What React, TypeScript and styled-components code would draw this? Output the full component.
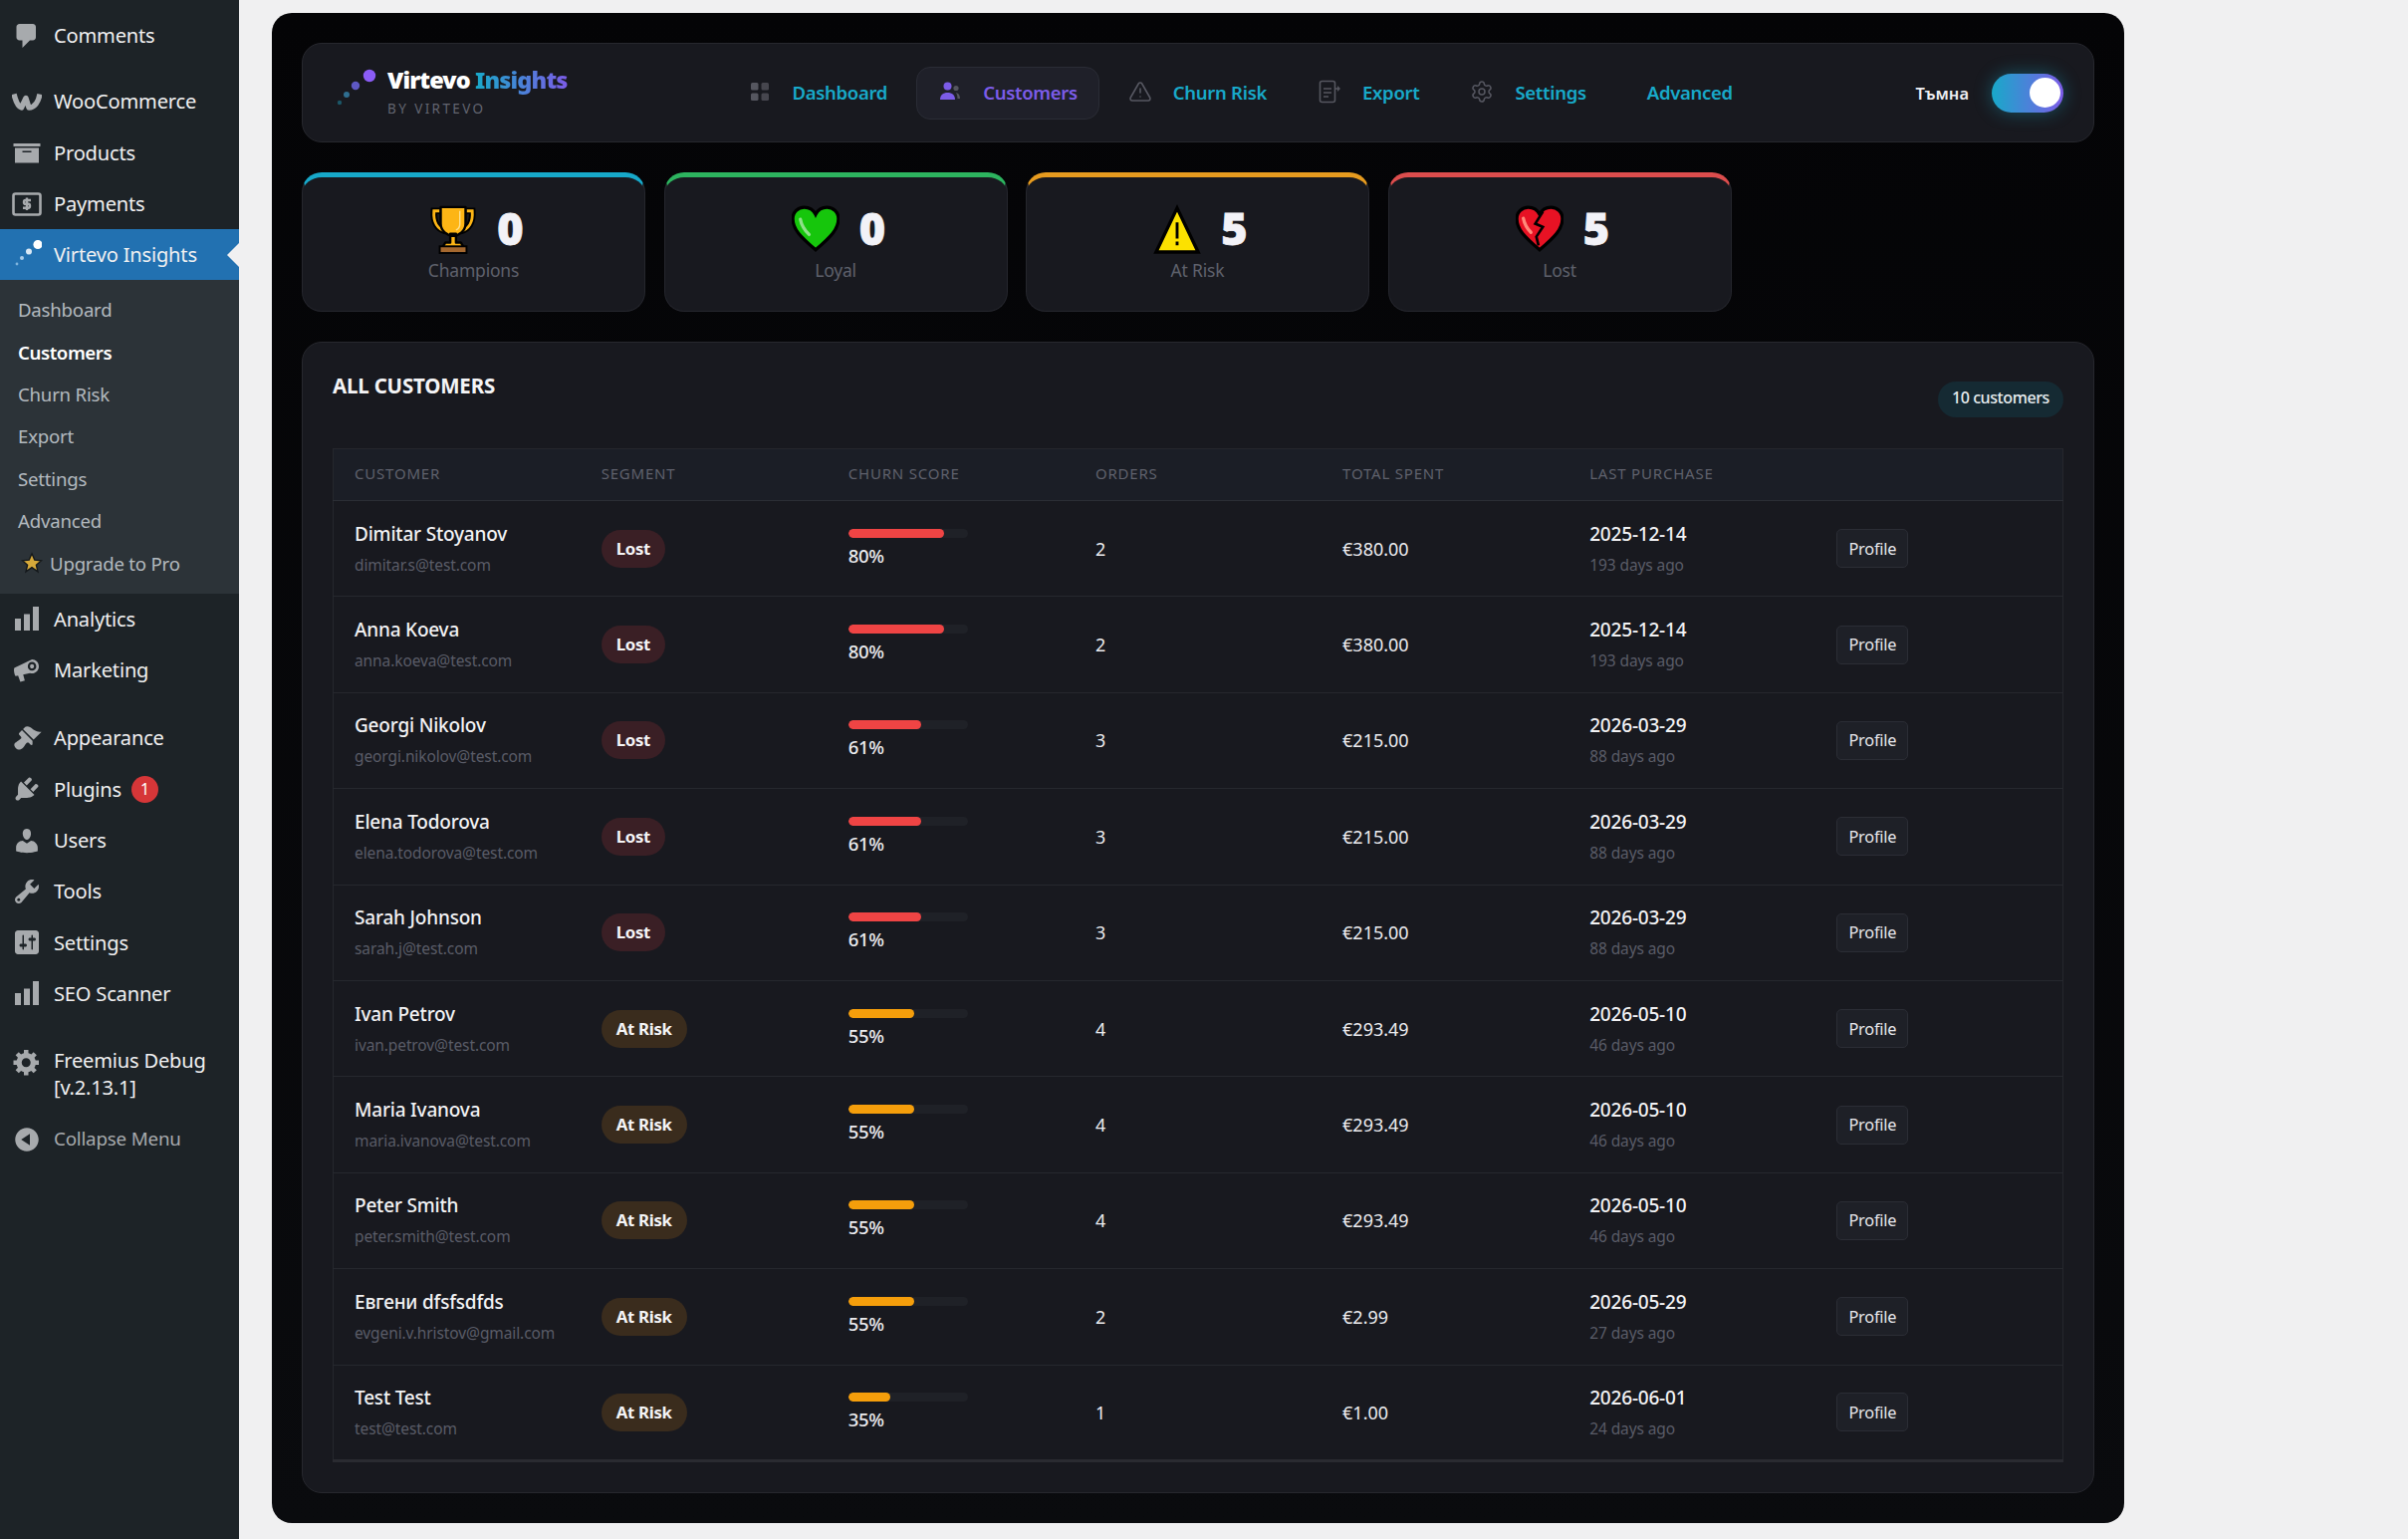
import React from "react";
import styled, { createGlobalStyle } from "styled-components";
import { Settings, TriangleAlert } from "lucide-react";

const GlobalStyle = createGlobalStyle`
  html, body {
    margin: 0;
    background: #f0f0f1;
    height: 1545px;
    overflow: hidden;
  }
  * { box-sizing: border-box; }
  body { font-family: "Noto Sans", "Open Sans", "Liberation Sans", sans-serif; }
`;

const Shell = styled.div`
  display: flex;
  height: 1545px;
`;

/* ---- wp admin menu ---- */
const Sidebar = styled.aside`
  width: 240px;
  flex: none;
  background: #1d2327;
  padding-top: 10px;
`;

const MenuItem = styled.div<{ $gap?: number; $active?: boolean; $muted?: boolean; $tall?: boolean }>`
  position: relative;
  display: flex;
  align-items: ${(p) => (p.$tall ? "flex-start" : "center")};
  height: ${(p) => (p.$tall ? "79px" : "51.3px")};
  margin-top: ${(p) => p.$gap ?? 0}px;
  padding-left: 12px;
  padding-top: ${(p) => (p.$tall ? "12px" : "0")};
  background: ${(p) => (p.$active ? "#2271b1" : "transparent")};
  color: ${(p) => (p.$muted ? "#a7aaad" : "#f0f0f1")};
  font-size: ${(p) => (p.$muted ? "18.8px" : "20.1px")};
  line-height: 27px;
  letter-spacing: -0.2px;

  &::after {
    content: "";
    display: ${(p) => (p.$active ? "block" : "none")};
    position: absolute;
    right: 0;
    top: 50%;
    margin-top: -12px;
    border: 12px solid transparent;
    border-right-color: #f0f0f1;
    border-left-width: 0;
  }
`;

const MenuIcon = styled.svg<{ $white?: boolean }>`
  width: 30px;
  height: 30px;
  flex: none;
  margin-right: 12px;
  fill: ${(p) => (p.$white ? "#fff" : "#a7aaad")};
`;

const Count = styled.span`
  width: 27px;
  height: 27px;
  margin-left: 10px;
  border-radius: 50%;
  background: #d63638;
  color: #fff;
  font-size: 16px;
  line-height: 27px;
  text-align: center;
`;

const Submenu = styled.div`
  background: #2c3338;
  padding: 8px 0 9.5px;
`;

const SubItem = styled.div<{ $current?: boolean }>`
  display: flex;
  align-items: center;
  height: 42.4px;
  padding-left: 18px;
  color: ${(p) => (p.$current ? "#fff" : "rgba(240, 246, 252, 0.7)")};
  font-size: 18.6px;
  font-weight: ${(p) => (p.$current ? 600 : 400)};
  letter-spacing: ${(p) => (p.$current ? "-0.4px" : "-0.2px")};
`;

const StarIcon = styled.svg`
  width: 22px;
  height: 22px;
  margin: 0 7px 0 3px;
`;

/* ---- plugin panel ---- */
const Main = styled.main`
  flex: 1;
  padding: 13px 0 0 33px;
`;

const Panel = styled.div`
  display: flex;
  flex-direction: column;
  gap: 30px;
  width: 1860px;
  height: 1516px;
  padding: 30px;
  border-radius: 20px;
  background: linear-gradient(180deg, #040406, #0a0b0e);
`;

const TopBar = styled.header`
  display: flex;
  align-items: center;
  flex: none;
  height: 100px;
  padding-left: 33px;
  padding-right: 30px;
  border: 1px solid #27282e;
  border-radius: 20px;
  background: #18191f;
`;

const Brand = styled.div`
  display: flex;
  align-items: flex-start;
  width: 391.5px;
  gap: 10px;
`;

const BrandMark = styled.svg`
  width: 42px;
  height: 42px;
  flex: none;
`;

const BrandName = styled.div`
  margin-top: -3px;
  font-size: 23.5px;
  font-weight: 900;
  line-height: 30px;
  letter-spacing: -0.9px;
  color: #fff;
`;

const GradientWord = styled.span`
  background: linear-gradient(90deg, #18a9c9, #7c5ce8);
  -webkit-background-clip: text;
  background-clip: text;
  color: transparent;
`;

const BrandSub = styled.div`
  margin-top: 5px;
  font-size: 13.5px;
  line-height: 18px;
  letter-spacing: 2.4px;
  color: #62646f;
`;

const Nav = styled.nav`
  display: flex;
  align-items: center;
  gap: 7px;
`;

const NavLink = styled.a<{ $active?: boolean; $plain?: boolean }>`
  display: flex;
  align-items: center;
  gap: 21px;
  height: 53px;
  padding: 0 21px 2px ${(p) => (p.$plain ? "31px" : "21px")};
  border: 1px solid ${(p) => (p.$active ? "#2a2c35" : "transparent")};
  border-radius: 14px;
  background: ${(p) => (p.$active ? "#1f2029" : "transparent")};
  color: ${(p) => (p.$active ? "#7c5ce8" : "#18a9c9")};
  font-size: 18.5px;
  font-weight: 600;
  letter-spacing: -0.3px;
  white-space: nowrap;

  svg {
    width: 24px;
    height: 24px;
    flex: none;
    color: #565761;
  }
`;

const ThemeSwitch = styled.div`
  display: flex;
  align-items: center;
  gap: 23px;
  margin-left: auto;
  color: #eeeef2;
  font-size: 16.5px;
  font-weight: 600;
`;

const Toggle = styled.div`
  position: relative;
  width: 72px;
  height: 39px;
  border-radius: 20px;
  background: linear-gradient(90deg, #18a9c9, #7c5ce8);
  box-shadow: 0 0 18px rgba(24, 169, 201, 0.4);

  &::after {
    content: "";
    position: absolute;
    right: 3px;
    top: 4.5px;
    width: 31px;
    height: 30px;
    border-radius: 50%;
    background: #fff;
  }
`;

const StatRow = styled.section`
  display: flex;
  gap: 18.5px;
  flex: none;
`;

const StatCard = styled.div<{ $color: string }>`
  display: flex;
  flex-direction: column;
  align-items: center;
  width: 345px;
  height: 140px;
  padding-top: 26px;
  border: 1px solid #25262d;
  border-top: 5px solid ${(p) => p.$color};
  border-radius: 20px;
  background: #18191f;
`;

const StatTop = styled.div`
  display: flex;
  align-items: center;
  gap: 20px;
  height: 52px;
  padding-left: 6px;
`;

const StatIcon = styled.svg`
  width: 48px;
  height: 52px;
  flex: none;
`;

const StatValue = styled.span`
  margin-top: -2px;
  color: #f2f2f7;
  font-size: 45px;
  font-weight: 900;
  line-height: 52px;
  -webkit-text-stroke: 0.8px #f2f2f7;
`;

const StatLabel = styled.div`
  margin-top: 3px;
  color: #5f616c;
  font-size: 17.5px;
  line-height: 24px;
  letter-spacing: -0.2px;
`;

const TableCard = styled.section`
  flex: 1;
  padding: 30px;
  border: 1px solid #27282e;
  border-radius: 20px;
  background: #18191f;
`;

const TableHead = styled.div`
  display: flex;
  justify-content: space-between;
  align-items: flex-start;
  margin-bottom: 31px;
`;

const TableTitle = styled.h2`
  margin: -2.5px 0 0;
  color: #f4f4f6;
  font-size: 20.5px;
  font-weight: 700;
  line-height: 30px;
  letter-spacing: -0.2px;
`;

const CountPill = styled.span`
  margin-top: 9px;
  height: 36px;
  padding: 0 14px;
  border-radius: 18px;
  background: #152a33;
  color: #e8eef0;
  font-size: 16px;
  font-weight: 500;
  line-height: 33.5px;
  letter-spacing: -0.4px;
`;

const Grid = styled.table`
  width: 100%;
  table-layout: fixed;
  border-collapse: collapse;
  border: 1px solid #25272d;
  border-bottom: 3px solid #2a2b31;
`;

const HeadCell = styled.th`
  height: 52px;
  padding: 0 0 3px 21px;
  background: #1b1e26;
  border-bottom: 1px solid #2b2e35;
  color: #5f616c;
  font-size: 15px;
  font-weight: 400;
  letter-spacing: 0.8px;
  text-align: left;
  text-transform: uppercase;
`;

const Row = styled.tr`
  height: 96.4px;
  border-bottom: 1px solid #26282e;
  &:last-child { border-bottom: none; }
`;

const Cell = styled.td`
  padding: 0 0 0 21px;
  color: #ececef;
  font-size: 18px;
  vertical-align: middle;
`;

const Primary = styled.div`
  color: #f2f2f4;
  font-size: 19px;
  font-weight: 500;
  line-height: 30px;
  letter-spacing: -0.2px;
`;

const Secondary = styled.div`
  margin: 5px 0 3px;
  color: #5a5c67;
  font-size: 15.5px;
  line-height: 22px;
  letter-spacing: -0.1px;
`;

const Segment = styled.span<{ $tone: "lost" | "risk" }>`
  display: inline-block;
  height: 38px;
  padding: 0 15px;
  border-radius: 19px;
  background: ${(p) => (p.$tone === "lost" ? "#3a1f25" : "#3a2c1d")};
  color: #f4f4f6;
  font-size: 16.8px;
  font-weight: 700;
  line-height: 38px;
  letter-spacing: -0.3px;
`;

const Track = styled.div`
  width: 120px;
  height: 9px;
  margin-bottom: 5px;
  border-radius: 5px;
  background: #1f2127;
  overflow: hidden;
`;

const Fill = styled.div<{ $tone: "lost" | "risk" }>`
  height: 100%;
  border-radius: 5px;
  background: ${(p) => (p.$tone === "lost" ? "#ef4444" : "#f59e0b")};
`;

const Percent = styled.div`
  color: #ececef;
  font-size: 18.5px;
  font-weight: 500;
  line-height: 26px;
  letter-spacing: -0.3px;
`;

const ProfileButton = styled.button`
  width: 72px;
  height: 39px;
  padding: 0;
  border: 1px solid #2b2d35;
  border-radius: 5px;
  background: #1e2027;
  color: #e8e8ec;
  font-family: inherit;
  font-size: 16.3px;
  letter-spacing: -0.2px;
`;

/* ---- drawings ---- */
const heart = "M24 42C10 30 3 23 3 13.5 3 7 8 3 13.5 3 18 3 22 5.5 24 9.5 26 5.5 30 3 34.5 3 40 3 45 7 45 13.5 45 23 38 30 24 42Z";

const Trophy = () => (
  <StatIcon viewBox="0 0 50 52">
    <path d="M11 7H5c-1 12 4 19 12 21M39 7h6c1 12-4 19-12 21" fill="none" stroke="#000" strokeWidth="7" />
    <path d="M11 7H5c-1 12 4 19 12 21M39 7h6c1 12-4 19-12 21" fill="none" stroke="#fdb515" strokeWidth="3" />
    <path d="M12 3h26v17c0 8-7 13-13 13s-13-5-13-13zM22 31h6v9h5l3 5H14l3-5h5z" fill="#fdb515" stroke="#000" strokeWidth="2.5" strokeLinejoin="round" />
    <path d="M32 7v14c0 3-2 5-4 6" fill="none" stroke="#ffe08a" strokeWidth="1.5" />
    <rect x="11" y="44" width="28" height="7" fill="#a5682f" stroke="#000" strokeWidth="2" />
  </StatIcon>
);

const GreenHeart = () => (
  <StatIcon viewBox="2 2 44 42">
    <path d={heart} fill="#16c60c" stroke="#000" strokeWidth="3" />
    <path d="M10 14c1 6 4 10 8 14" fill="none" stroke="#8fe08a" strokeWidth="3" strokeLinecap="round" />
  </StatIcon>
);

const Warning = () => (
  <StatIcon viewBox="0 0 50 52">
    <path d="M25 4 47 50H3Z" fill="#fce100" stroke="#000" strokeWidth="3.5" />
    <path d="M23.5 19h3v17h-3zM23.5 39h3v4h-3z" fill="#000" />
  </StatIcon>
);

const BrokenHeart = () => (
  <StatIcon viewBox="2 2 44 42">
    <path d={heart} fill="#e81224" stroke="#000" strokeWidth="3" />
    <path d="M27 7l-7 11 7 3-6 9 2 8" fill="none" stroke="#000" strokeWidth="2.4" />
    <path d="M9 13c1 5 3 9 7 13" fill="none" stroke="#ff8a7a" strokeWidth="3" strokeLinecap="round" />
  </StatIcon>
);

const wp: Record<string, string> = {
  comments: "M5 2h9c1.1 0 2 .9 2 2v7c0 1.1-.9 2-2 2h-2l-5 5v-5H5c-1.1 0-2-.9-2-2V4c0-1.1.9-2 2-2z",
  archive: "M19 4v2H1V4h18zM2 7h16v10H2V7zm11 3V9H7v1h6z",
  bars: "M18 18V2h-4v16h4zm-6 0V7H8v11h4zm-6 0v-8H2v8h4z",
  megaphone: "M13.4 2.6c2.6 0 4.6 2.1 4.6 4.7S16 12 13.4 12c-.5 0-.9-.1-1.3-.2l-4.6 1.1 1.1 3.9-3 .9-1.5-4.2-1.6.4C1.6 13 1 9.5 1.6 8.3zm0 1.8c-1.6 0-2.8 1.3-2.8 2.9s1.2 2.9 2.8 2.9 2.9-1.3 2.9-2.9-1.3-2.9-2.9-2.9zm0 1.5c.8 0 1.4.6 1.4 1.4s-.6 1.4-1.4 1.4-1.3-.6-1.3-1.4.5-1.4 1.3-1.4z",
  appearance: "M14.48 11.06L7.41 3.99l1.5-1.5c.5-.56 2.3-.47 3.51.32 1.21.8 1.43 1.28 2.91 2.1 1.18.64 2.45 1.26 4.45.85zm-.71.71L6.7 4.7 4.93 6.47c-.39.39-.39 1.02 0 1.41l1.06 1.06c.39.39.39 1.03 0 1.42-.6.6-1.43 1.11-2.21 1.69-.35.26-.7.53-1.01.84C1.43 13.23.99 15.09 2.57 16.67c1.58 1.58 3.43 1.14 4.79-.21.31-.31.58-.66.84-1.01.58-.78 1.09-1.61 1.69-2.21.39-.39 1.02-.39 1.41 0l1.06 1.06c.39.39 1.02.39 1.41 0z",
  plugins: "M13.11 4.36L9.87 7.6 8 5.73l3.24-3.24c.35-.34 1.05-.2 1.56.32.52.51.66 1.21.31 1.55zm-8 1.77l.91-1.12 9.01 9.01-1.19.84c-.71.71-2.63 1.16-3.82 1.16H6.14L4.9 17.26c-.59.59-1.54.59-2.12 0-.59-.58-.59-1.53 0-2.12l1.24-1.24v-3.88c0-1.13.4-3.19 1.09-3.89zm7.26 3.97l3.24-3.24c.34-.35 1.04-.21 1.55.31.52.51.66 1.21.31 1.55l-3.24 3.25z",
  users: "M10 9.25c-2.27 0-2.73-3.44-2.73-3.44C7 4.02 7.82 2 9.97 2c2.16 0 2.98 2.02 2.71 3.81 0 0-.41 3.44-2.68 3.44zm0 2.57L12.72 10c2.39 0 4.52 2.33 4.52 4.53v2.49s-3.65 1.13-7.24 1.13c-3.65 0-7.24-1.13-7.24-1.13v-2.49c0-2.25 1.94-4.48 4.47-4.48z",
  tools: "M16.68 9.77c-1.34 1.34-3.3 1.67-4.95.99l-5.41 6.52c-.99.99-2.59.99-3.58 0s-.99-2.59 0-3.57l6.52-5.42c-.68-1.65-.35-3.61.99-4.95 1.28-1.28 3.12-1.62 4.72-1.06l-2.89 2.89 2.82 2.82 2.86-2.87c.53 1.58.18 3.39-1.08 4.65zM3.81 16.21c.4.39 1.04.39 1.43 0 .4-.4.4-1.04 0-1.43-.39-.4-1.03-.4-1.43 0-.39.39-.39 1.03 0 1.43z",
  settings: "M18 16V4c0-1.1-.9-2-2-2H4c-1.1 0-2 .9-2 2v12c0 1.1.9 2 2 2h12c1.1 0 2-.9 2-2zM8 11h1c.55 0 1 .45 1 1s-.45 1-1 1H8v1.5c0 .28-.22.5-.5.5s-.5-.22-.5-.5V13H6c-.55 0-1-.45-1-1s.45-1 1-1h1V5.5c0-.28.22-.5.5-.5s.5.22.5.5V11zm5-2h-1c-.55 0-1-.45-1-1s.45-1 1-1h1V5.5c0-.28.22-.5.5-.5s.5.22.5.5V7h1c.55 0 1 .45 1 1s-.45 1-1 1h-1v5.5c0 .28-.22.5-.5.5s-.5-.22-.5-.5V9z",
  gear: "M18 12h-2.18c-.17.7-.44 1.35-.81 1.93l1.54 1.54-2.1 2.1-1.54-1.54c-.58.36-1.23.63-1.91.79V19H8v-2.18c-.68-.16-1.33-.43-1.91-.79l-1.54 1.54-2.12-2.12 1.54-1.54c-.36-.58-.63-1.23-.79-1.91H1V9.03h2.17c.16-.7.44-1.35.8-1.94L2.43 5.55l2.1-2.1 1.54 1.54c.58-.37 1.24-.64 1.93-.81V2h3v2.18c.68.16 1.33.43 1.91.79l1.54-1.54 2.12 2.12-1.54 1.54c.36.59.64 1.24.8 1.94H18V12zm-8.5 1.5c1.66 0 3-1.34 3-3s-1.34-3-3-3-3 1.34-3 3 1.34 3 3 3z",
  collapse: "M10 2.16c4.33 0 7.84 3.51 7.84 7.84s-3.51 7.84-7.84 7.84S2.16 14.33 2.16 10 5.71 2.16 10 2.16zm2 11.72V6.12L6.18 9.97z",
};

const WpIcon = ({ name }: { name: string }) => (
  <MenuIcon viewBox="0 0 20 20">
    <path d={wp[name]} />
  </MenuIcon>
);

const WooIcon = () => (
  <MenuIcon viewBox="0 0 30 30">
    <path d="M2 7.5c2 8 4 12.5 7.5 13.5l4.5-9.5 3 9.5c5.500 0 9.500-5.500 11-13.500" fill="none" stroke="#a7aaad" strokeWidth="5.4" strokeLinejoin="round" />
  </MenuIcon>
);

const PaymentsIcon = () => (
  <MenuIcon viewBox="0 0 30 30">
    <rect x="1.5" y="4.5" width="27" height="21" rx="2" fill="none" stroke="#a7aaad" strokeWidth="2.6" />
    <path d="M19 11h-5.500c-2 0-2 3.800 0 3.800h3c2 0 2 3.900 0 3.900H11M15 8.500v12.500" fill="none" stroke="#a7aaad" strokeWidth="2.4" />
  </MenuIcon>
);

const VirtevoIcon = () => (
  <MenuIcon viewBox="0 0 30 30">
    <circle cx="26" cy="4.5" r="4.6" fill="#fff" />
    <circle cx="17" cy="11.5" r="3" fill="#d9e8f5" />
    <circle cx="10" cy="18" r="2" fill="#a9cdea" />
    <circle cx="5" cy="24" r="1.4" fill="#7fb5de" />
  </MenuIcon>
);

const BrandDots = () => (
  <BrandMark viewBox="0 0 42 42">
    <circle cx="34" cy="8" r="6.2" fill="#8b5cf6" />
    <circle cx="20" cy="18" r="4.2" fill="#5e58c4" />
    <circle cx="11" cy="27" r="3" fill="#2f6e90" />
    <circle cx="4" cy="35" r="2.2" fill="#1c5667" />
  </BrandMark>
);

const DashIcon = () => (
  <svg viewBox="0 0 24 24" fill="#55565f">
    <rect x="3" y="3" width="7.5" height="7.5" rx="1.5" />
    <rect x="13.5" y="3" width="7.5" height="7.5" rx="1.5" opacity="0.75" />
    <rect x="3" y="13.5" width="7.5" height="7.5" rx="1.5" />
    <rect x="13.5" y="13.5" width="7.5" height="7.5" rx="1.5" opacity="0.75" />
  </svg>
);

const UsersIcon = () => (
  <svg viewBox="0 0 24 24">
    <circle cx="9.5" cy="6.5" r="4" fill="#7c5ce8" />
    <path d="M2 20c0-4.500 3-7 7.500-7s7.500 2.500 7.500 7z" fill="#7c5ce8" />
    <circle cx="18" cy="8.5" r="2.6" fill="#55565f" />
    <path d="M18 13c2.500.4 4 2.600 4 6h-2.500c0-2.200-.5-4-1.500-6z" fill="#55565f" />
  </svg>
);

const ExportIcon = () => (
  <svg viewBox="0 0 24 24" fill="none" stroke="#55565f" strokeWidth="1.6">
    <rect x="2.5" y="1.5" width="15" height="21" rx="2" />
    <path d="M6 9h8M6 13h8M6 17h5" />
    <path d="M20 6l3 3-3 3z" fill="#55565f" stroke="none" />
    <path d="M17.5 9H20" />
  </svg>
);

/* ---- data ---- */
type Tone = "lost" | "risk";

const customers: { name: string; email: string; tone: Tone; score: number; orders: number; spent: string; date: string; ago: number }[] = [
  { name: "Dimitar Stoyanov", email: "dimitar.s@test.com", tone: "lost", score: 80, orders: 2, spent: "€380.00", date: "2025-12-14", ago: 193 },
  { name: "Anna Koeva", email: "anna.koeva@test.com", tone: "lost", score: 80, orders: 2, spent: "€380.00", date: "2025-12-14", ago: 193 },
  { name: "Georgi Nikolov", email: "georgi.nikolov@test.com", tone: "lost", score: 61, orders: 3, spent: "€215.00", date: "2026-03-29", ago: 88 },
  { name: "Elena Todorova", email: "elena.todorova@test.com", tone: "lost", score: 61, orders: 3, spent: "€215.00", date: "2026-03-29", ago: 88 },
  { name: "Sarah Johnson", email: "sarah.j@test.com", tone: "lost", score: 61, orders: 3, spent: "€215.00", date: "2026-03-29", ago: 88 },
  { name: "Ivan Petrov", email: "ivan.petrov@test.com", tone: "risk", score: 55, orders: 4, spent: "€293.49", date: "2026-05-10", ago: 46 },
  { name: "Maria Ivanova", email: "maria.ivanova@test.com", tone: "risk", score: 55, orders: 4, spent: "€293.49", date: "2026-05-10", ago: 46 },
  { name: "Peter Smith", email: "peter.smith@test.com", tone: "risk", score: 55, orders: 4, spent: "€293.49", date: "2026-05-10", ago: 46 },
  { name: "Евгени dfsfsdfds", email: "evgeni.v.hristov@gmail.com", tone: "risk", score: 55, orders: 2, spent: "€2.99", date: "2026-05-29", ago: 27 },
  { name: "Test Test", email: "test@test.com", tone: "risk", score: 35, orders: 1, spent: "€1.00", date: "2026-06-01", ago: 24 },
];

const subItems = ["Dashboard", "Customers", "Churn Risk", "Export", "Settings", "Advanced"];

export default function App() {
  return (
    <>
      <GlobalStyle />
      <Shell>
        <Sidebar>
          <MenuItem><WpIcon name="comments" />Comments</MenuItem>
          <MenuItem $gap={15}><WooIcon />WooCommerce</MenuItem>
          <MenuItem><WpIcon name="archive" />Products</MenuItem>
          <MenuItem><PaymentsIcon />Payments</MenuItem>
          <MenuItem $active><VirtevoIcon />Virtevo Insights</MenuItem>
          <Submenu>
            {subItems.map((s) => (
              <SubItem key={s} $current={s === "Customers"}>{s}</SubItem>
            ))}
            <SubItem>
              <StarIcon viewBox="0 0 24 24">
                <path d="M12 2l3 6.8 7.4.7-5.6 4.9 1.7 7.200L12 17l-6.500 4.600 1.700-7.200L1.600 9.500 9 8.800z" fill="#d6a93a" stroke="#14181b" strokeWidth="1.5" />
              </StarIcon>
              Upgrade to Pro
            </SubItem>
          </Submenu>
          <MenuItem><WpIcon name="bars" />Analytics</MenuItem>
          <MenuItem><WpIcon name="megaphone" />Marketing</MenuItem>
          <MenuItem $gap={17}><WpIcon name="appearance" />Appearance</MenuItem>
          <MenuItem><WpIcon name="plugins" />Plugins<Count>1</Count></MenuItem>
          <MenuItem><WpIcon name="users" />Users</MenuItem>
          <MenuItem><WpIcon name="tools" />Tools</MenuItem>
          <MenuItem><WpIcon name="settings" />Settings</MenuItem>
          <MenuItem><WpIcon name="bars" />SEO Scanner</MenuItem>
          <MenuItem $gap={16} $tall><WpIcon name="gear" /><span>Freemius Debug<br />[v.2.13.1]</span></MenuItem>
          <MenuItem $muted><WpIcon name="collapse" />Collapse Menu</MenuItem>
        </Sidebar>

        <Main>
          <Panel>
            <TopBar>
              <Brand>
                <BrandDots />
                <div>
                  <BrandName>Virtevo <GradientWord>Insights</GradientWord></BrandName>
                  <BrandSub>BY VIRTEVO</BrandSub>
                </div>
              </Brand>
              <Nav>
                <NavLink><DashIcon />Dashboard</NavLink>
                <NavLink $active><UsersIcon />Customers</NavLink>
                <NavLink><TriangleAlert strokeWidth={1.6} />Churn Risk</NavLink>
                <NavLink><ExportIcon />Export</NavLink>
                <NavLink><Settings strokeWidth={1.5} />Settings</NavLink>
                <NavLink $plain>Advanced</NavLink>
              </Nav>
              <ThemeSwitch>
                Тъмна
                <Toggle />
              </ThemeSwitch>
            </TopBar>

            <StatRow>
              <StatCard $color="#17a8c9">
                <StatTop><Trophy /><StatValue>0</StatValue></StatTop>
                <StatLabel>Champions</StatLabel>
              </StatCard>
              <StatCard $color="#2db45f">
                <StatTop><GreenHeart /><StatValue>0</StatValue></StatTop>
                <StatLabel>Loyal</StatLabel>
              </StatCard>
              <StatCard $color="#e69b1f">
                <StatTop><Warning /><StatValue>5</StatValue></StatTop>
                <StatLabel>At Risk</StatLabel>
              </StatCard>
              <StatCard $color="#dc4d4d">
                <StatTop><BrokenHeart /><StatValue>5</StatValue></StatTop>
                <StatLabel>Lost</StatLabel>
              </StatCard>
            </StatRow>

            <TableCard>
              <TableHead>
                <TableTitle>ALL CUSTOMERS</TableTitle>
                <CountPill>10 customers</CountPill>
              </TableHead>
              <Grid>
                <thead>
                  <tr>
                    <HeadCell>Customer</HeadCell>
                    <HeadCell>Segment</HeadCell>
                    <HeadCell>Churn Score</HeadCell>
                    <HeadCell>Orders</HeadCell>
                    <HeadCell>Total Spent</HeadCell>
                    <HeadCell>Last Purchase</HeadCell>
                    <HeadCell />
                  </tr>
                </thead>
                <tbody>
                  {customers.map((c) => (
                    <Row key={c.email}>
                      <Cell>
                        <Primary>{c.name}</Primary>
                        <Secondary>{c.email}</Secondary>
                      </Cell>
                      <Cell>
                        <Segment $tone={c.tone}>{c.tone === "lost" ? "Lost" : "At Risk"}</Segment>
                      </Cell>
                      <Cell>
                        <Track>
                          <Fill $tone={c.tone} style={{ width: `${c.score}%` }} />
                        </Track>
                        <Percent>{c.score}%</Percent>
                      </Cell>
                      <Cell>{c.orders}</Cell>
                      <Cell>{c.spent}</Cell>
                      <Cell>
                        <Primary>{c.date}</Primary>
                        <Secondary>{c.ago} days ago</Secondary>
                      </Cell>
                      <Cell>
                        <ProfileButton>Profile</ProfileButton>
                      </Cell>
                    </Row>
                  ))}
                </tbody>
              </Grid>
            </TableCard>
          </Panel>
        </Main>
      </Shell>
    </>
  );
}
